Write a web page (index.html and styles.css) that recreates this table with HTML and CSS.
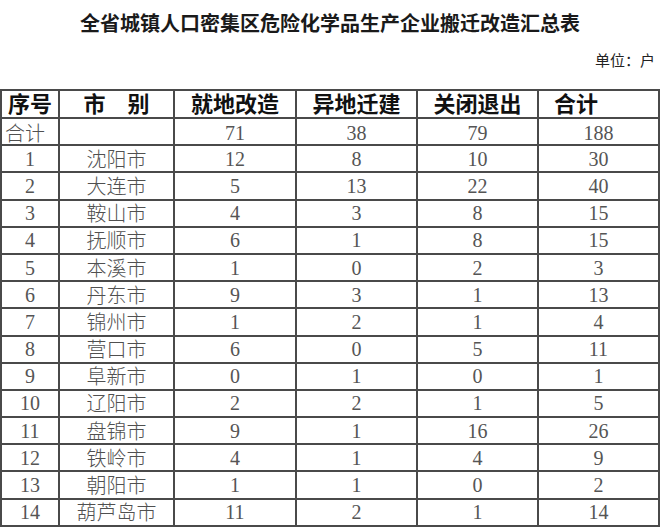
FILE: index.html
```html
<!DOCTYPE html>
<html lang="zh-CN">
<head>
<meta charset="utf-8">
<title>全省城镇人口密集区危险化学品生产企业搬迁改造汇总表</title>
<link rel="stylesheet" href="styles.css">
</head>
<body>
<h1 class="title">全省城镇人口密集区危险化学品生产企业搬迁改造汇总表</h1>
<div class="unit">单位：户</div>
<table class="summary">
  <colgroup>
    <col class="c1"><col class="c2"><col class="c3"><col class="c4"><col class="c5"><col class="c6">
  </colgroup>
  <thead>
    <tr>
      <th>序号</th>
      <th>市　别</th>
      <th>就地改造</th>
      <th>异地迁建</th>
      <th>关闭退出</th>
      <th class="left">合计</th>
    </tr>
  </thead>
  <tbody>
    <tr class="total-row"><td class="total-label">合计</td><td></td><td>71</td><td>38</td><td>79</td><td>188</td></tr>
    <tr><td>1</td><td>沈阳市</td><td>12</td><td>8</td><td>10</td><td>30</td></tr>
    <tr><td>2</td><td>大连市</td><td>5</td><td>13</td><td>22</td><td>40</td></tr>
    <tr><td>3</td><td>鞍山市</td><td>4</td><td>3</td><td>8</td><td>15</td></tr>
    <tr><td>4</td><td>抚顺市</td><td>6</td><td>1</td><td>8</td><td>15</td></tr>
    <tr><td>5</td><td>本溪市</td><td>1</td><td>0</td><td>2</td><td>3</td></tr>
    <tr><td>6</td><td>丹东市</td><td>9</td><td>3</td><td>1</td><td>13</td></tr>
    <tr><td>7</td><td>锦州市</td><td>1</td><td>2</td><td>1</td><td>4</td></tr>
    <tr><td>8</td><td>营口市</td><td>6</td><td>0</td><td>5</td><td>11</td></tr>
    <tr><td>9</td><td>阜新市</td><td>0</td><td>1</td><td>0</td><td>1</td></tr>
    <tr><td>10</td><td>辽阳市</td><td>2</td><td>2</td><td>1</td><td>5</td></tr>
    <tr><td>11</td><td>盘锦市</td><td>9</td><td>1</td><td>16</td><td>26</td></tr>
    <tr><td>12</td><td>铁岭市</td><td>4</td><td>1</td><td>4</td><td>9</td></tr>
    <tr><td>13</td><td>朝阳市</td><td>1</td><td>1</td><td>0</td><td>2</td></tr>
    <tr><td>14</td><td>葫芦岛市</td><td>11</td><td>2</td><td>1</td><td>14</td></tr>
  </tbody>
</table>
</body>
</html>
```

FILE: styles.css
```css
html, body {
  margin: 0;
  padding: 0;
  background: #ffffff;
}

body {
  width: 660px;
  font-family: "Liberation Serif", "Noto Sans CJK SC", serif;
  color: #222;
}

.title {
  margin: 0;
  padding-top: 10px;
  font-family: "Noto Sans CJK SC", sans-serif;
  font-size: 20px;
  line-height: 26px;
  font-weight: 700;
  text-align: center;
  color: #1a1a1a;
}

.unit {
  margin-top: 14px;
  padding-right: 5px;
  font-family: "Noto Sans CJK SC", sans-serif;
  font-size: 15px;
  line-height: 20px;
  text-align: right;
  color: #222;
}

.summary {
  margin-top: 19px;
  width: 658px;
  border-collapse: collapse;
  table-layout: fixed;
}

.c1 { width: 58px; }
.c2 { width: 115px; }
.c3 { width: 122px; }
.c4 { width: 121px; }
.c5 { width: 121px; }
.c6 { width: 121px; }

.summary th,
.summary td {
  border: 2px solid #4a4a4a;
  padding: 0;
  text-align: center;
  vertical-align: middle;
  white-space: nowrap;
}

.summary th {
  height: 22px;
  padding-bottom: 4px;
  font-family: "Noto Sans CJK SC", sans-serif;
  font-size: 22px;
  line-height: 22px;
  font-weight: 700;
  color: #111;
}

.summary th.left {
  text-align: left;
  padding-left: 15px;
}

.summary td {
  height: 25.2px;
  font-family: "Liberation Serif", "Noto Sans CJK SC", serif;
  font-size: 20px;
  line-height: 20px;
  font-weight: 400;
  color: #555;
}

.summary .total-row td {
  height: 23.2px;
  padding-top: 2px;
}

.summary td:nth-child(2),
.summary td.total-label {
  font-family: "Noto Sans CJK SC", sans-serif;
  font-weight: 300;
  font-size: 20px;
  color: #505050;
}

.summary .total-row td.total-label {
  text-align: left;
  padding-left: 3px;
}
```
